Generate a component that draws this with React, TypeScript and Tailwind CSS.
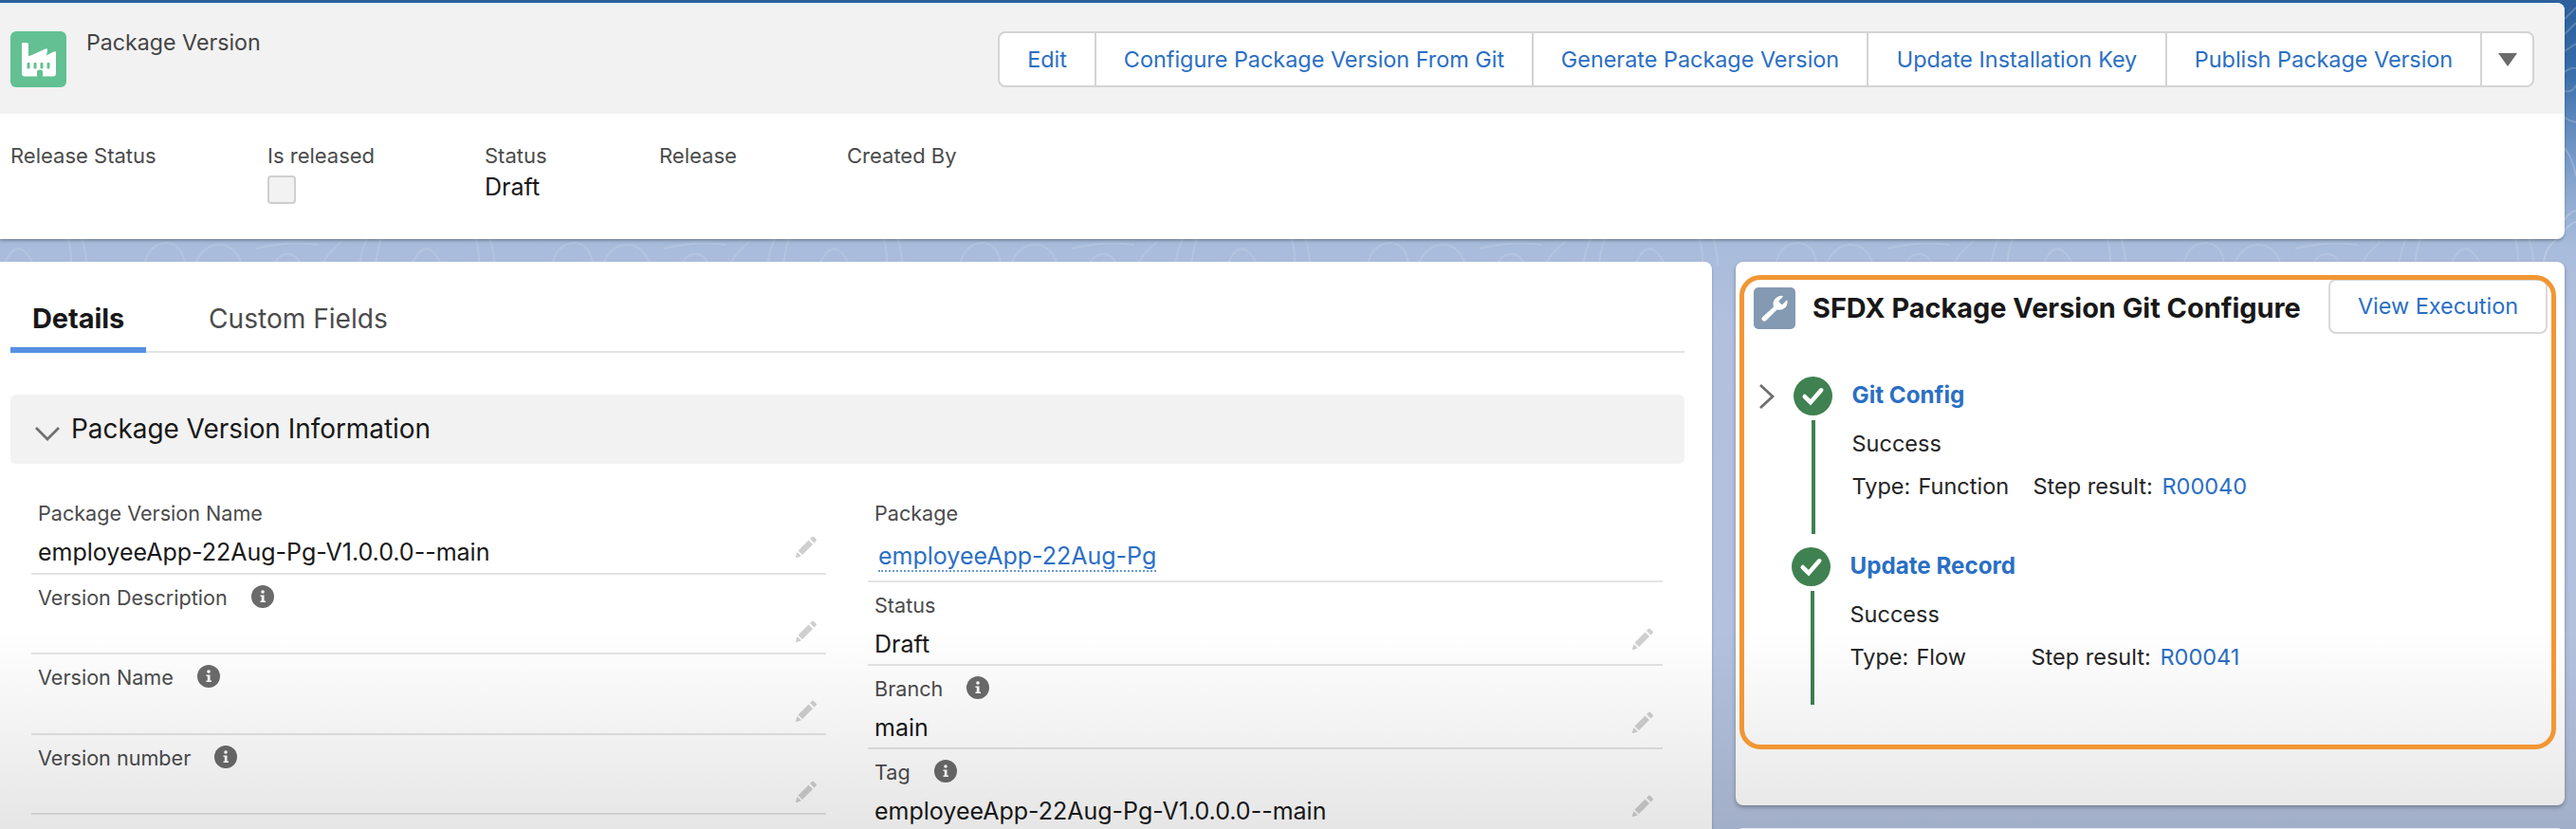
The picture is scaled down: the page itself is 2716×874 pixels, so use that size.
interface Field {
  label: string;
  value?: string;
  info?: boolean;
  link?: boolean;
  height: string;
}

interface Step {
  name: string;
  type: string;
  result: string;
  expandable?: boolean;
}

const actions = [
  { label: 'Edit', width: 'w-[102px]' },
  { label: 'Configure Package Version From Git', width: 'w-[461px]' },
  { label: 'Generate Package Version', width: 'w-[353px]' },
  { label: 'Update Installation Key', width: 'w-[315px]' },
  { label: 'Publish Package Version', width: 'w-[332px]' },
];

const leftFields: Field[] = [
  { label: 'Package Version Name', value: 'employeeApp-22Aug-Pg-V1.0.0.0--main', height: 'h-[89px]' },
  { label: 'Version Description', info: true, height: 'h-[84px]' },
  { label: 'Version Name', info: true, height: 'h-[85px]' },
  { label: 'Version number', info: true, height: 'h-[84px]' },
];

const rightFields: Field[] = [
  { label: 'Package', value: 'employeeApp-22Aug-Pg', link: true, height: 'h-[97px]' },
  { label: 'Status', value: 'Draft', height: 'h-[88px]' },
  { label: 'Branch', value: 'main', info: true, height: 'h-[88px]' },
  { label: 'Tag', value: 'employeeApp-22Aug-Pg-V1.0.0.0--main', info: true, height: 'h-[88px]' },
];

const steps: Step[] = [
  { name: 'Git Config', type: 'Function', result: 'R00040', expandable: true },
  { name: 'Update Record', type: 'Flow', result: 'R00041' },
];

function FactoryIcon() {
  return (
    <svg viewBox="0 0 59 59" className="h-[59px] w-[59px] shrink-0">
      <rect width="59" height="59" rx="6" fill="#62c092" />
      <path
        fill="#fff"
        fillRule="evenodd"
        d="M13 12h4q2 0 2 2v12l2.500-.5L37 18.500q2.500-1 2 1.500l-1 5.500 7.500-4q2.500-1 2.500 1V44.500q0 3-3 3H34v-5q0-2-3-2t-3 2v5H15q-3 0-3-3V13q0-1 1-1zM17.500 34v4.500q0 1 1 1h1q1 0 1-1V34q0-1-1-1h-1q-1 0-1 1zM24.500 34v4.500q0 1 1 1h1q1 0 1-1V34q0-1-1-1h-1q-1 0-1 1zM31.500 34v4.500q0 1 1 1h1q1 0 1-1V34q0-1-1-1h-1q-1 0-1 1zM38.500 34v4.500q0 1 1 1h1q1 0 1-1V34q0-1-1-1h-1q-1 0-1 1z"
      />
    </svg>
  );
}

function WrenchIcon() {
  return (
    <svg viewBox="0 0 44 44" className="mt-[3px] h-11 w-11 shrink-0">
      <rect width="44" height="44" rx="5" fill="#8499b2" />
      <path
        fill="#fff"
        d="M9 31.500L21 20.500q-1.500-5.500 2-9 3.500-3.200 7.500-2.500.7.400.2 1l-4 4q-.6.600 0 1.300l2.500 2.500q.7.600 1.300 0l4-4q.7-.5 1 .2.500 4.500-2.500 7.500-3.500 3.200-8.500 2L13 35q-2 1.500-3.800-.2-1.600-1.600-.2-3.300z"
      />
    </svg>
  );
}

function PencilIcon() {
  return (
    <svg viewBox="0 0 24 24" className="mb-[15px] mr-px h-6 w-6" fill="#cfcfcf">
      <path d="M3.500 15.500l4.500 4.500L19 9l-4.500-4.500zM16 3l4.500 4.500 2-2q1-1 0-2L20 1q-1-1-2 0zM2.500 17L1 22q0 1.200 1.200 1L6.800 21.200z" />
    </svg>
  );
}

function InfoIcon() {
  return (
    <svg viewBox="0 0 24 24" className="mb-[3px] h-6 w-6">
      <circle cx="12" cy="12" r="12" fill="#6b6b6b" />
      <circle cx="12" cy="7" r="1.800" fill="#fff" />
      <path d="M9.500 10.500h4v6H15V18H9.500v-1.500h1.300V12H9.500z" fill="#fff" />
    </svg>
  );
}

function Backdrop() {
  return (
    <svg viewBox="0 0 2716 874" className="absolute inset-0 -z-10 h-full w-full">
      <defs>
        <linearGradient id="sky" x1="0" y1="0" x2="0" y2="1">
          <stop offset="0" stopColor="#2d609d" />
          <stop offset="0.080" stopColor="#356ba8" />
          <stop offset="0.150" stopColor="#6089bd" />
          <stop offset="0.230" stopColor="#8ba8d0" />
          <stop offset="0.300" stopColor="#a9bcdb" />
          <stop offset="0.400" stopColor="#b2c0de" />
          <stop offset="1" stopColor="#b4c2de" />
        </linearGradient>
        <pattern id="contours" width="430" height="300" patternUnits="userSpaceOnUse">
          <g fill="none" stroke="#fff" strokeOpacity="0.120" strokeWidth="2">
            <path d="M0 290q20-60 44 10M70 245q10 30 0 60M84 245q12 30 4 60M200 300q6-40 30-42t30 42M150 300q0-42 24-44t22 44M270 262q30-8 66-4M330 300q10-30 30-45M390 246q-14 24-10 54M404 246q-10 24-8 54M290 300q-6-30 12-32t16 32" />
          </g>
        </pattern>
      </defs>
      <rect width="2716" height="874" fill="url(#sky)" />
      <rect y="250" width="2716" height="30" fill="url(#contours)" />
      <g fill="none" stroke="#fff" strokeOpacity="0.200" strokeWidth="2">
        <path d="M2704 20l12-12M2704 36l12-12M2704 54l12-8M2704 76q6-5 12-4M2704 96q8 2 12-6M2704 124q6 4 12 5M2704 156q9 12 12 30M2704 232q4-8 12-10M2704 243q6-8 12-9M2682 276q2-16 14-24" />
      </g>
    </svg>
  );
}

function FieldRow({ field }: { field: Field }) {
  return (
    <div className={`flex flex-col border-b-2 border-[#e4e4e4] pl-[7px] pr-2 ${field.height}`}>
      <div className="flex h-12 shrink-0 items-center gap-[25px] text-[21.600px] text-[#4b4b4b]">
        <span>{field.label}</span>
        {field.info && <InfoIcon />}
      </div>
      <div className="flex flex-1 items-center justify-between text-[25px] leading-[30px] text-[#181818]">
        {field.link ? (
          <a className="mb-1 ml-1 border-b-2 border-dotted border-[#6d9ad0] text-[#2a6fc4]">{field.value}</a>
        ) : (
          <span className="mb-[5px]">{field.value}</span>
        )}
        {!field.link && <PencilIcon />}
      </div>
    </div>
  );
}

function StepItem({ step }: { step: Step }) {
  return (
    <div className="flex h-[179.500px]">
      <div className={`flex h-[41px] items-center pl-[5px] ${step.expandable ? 'w-[38.500px]' : 'w-[36.500px]'}`}>
        {step.expandable && (
          <svg viewBox="0 0 18 26" className="h-[26px] w-[18px]" fill="none" stroke="#6f6f6f" strokeWidth="2.800">
            <path d="M2 1l13 12L2 25" />
          </svg>
        )}
      </div>
      <div className="flex w-12 flex-col items-center">
        <svg viewBox="0 0 40 40" className="h-[41px] w-[41px] shrink-0">
          <circle cx="20" cy="20" r="20" fill="#3f8150" />
          <path d="M11.500 20.500l6 6L28.500 14" fill="none" stroke="#fff" strokeWidth="4.500" strokeLinecap="round" />
        </svg>
        <div className={`mt-[5px] h-[120px] w-1 bg-[#3f8150] ${step.expandable ? '' : 'ml-0.5'}`} />
      </div>
      <div className="flex flex-col pl-[17px] text-[23.500px] leading-[36px] text-[#242424]">
        <a className="mt-[2px] text-[24.200px] font-bold text-[#2a6fc4]">{step.name}</a>
        <span className="mt-[15px]">Success</span>
        <div className="mt-[9px] flex">
          <span className="w-[70px]">Type:</span>
          <span className="w-[121px]">{step.type}</span>
          <span className="w-[136px]">Step result:</span>
          <a className="text-[#2a6fc4]">{step.result}</a>
        </div>
      </div>
    </div>
  );
}

export default function App() {
  return (
    <div className="relative isolate h-[874px] w-[2716px] overflow-hidden pt-[3px] font-['Inter',sans-serif]">
      <Backdrop />

      {/* Record header */}
      <header className="w-[2704px] overflow-hidden rounded-r-lg bg-white shadow-[0_2px_3px_rgba(0,0,0,0.25)]">
        <div className="flex h-[117px] justify-between bg-[#f2f2f2] pl-[11px] pr-8 pt-[30px]">
          <div className="flex gap-[21px]">
            <FactoryIcon />
            <span className="text-[23.200px] leading-[24px] text-[#444]">Package Version</span>
          </div>
          <div className="flex h-[59px] rounded-lg border-2 border-[#d4d4d4] bg-white">
            {actions.map(a => (
              <button key={a.label} className={`border-r-2 border-[#d4d4d4] pt-px text-[23.400px] text-[#2a6fc4] ${a.width}`}>
                {a.label}
              </button>
            ))}
            <button className="flex w-[53px] items-center justify-center">
              <svg viewBox="0 0 20 14" className="h-[14px] w-5" fill="#6b6b6b">
                <path d="M0 0h20L10 14z" />
              </svg>
            </button>
          </div>
        </div>
        <div className="flex h-[132px] pl-[11px] pt-[31px] text-[22px] leading-[26px] text-[#4b4b4b]">
          <span className="w-[271px]">Release Status</span>
          <div className="w-[229px]">
            <span>Is released</span>
            <div className="mt-2 h-[30px] w-[30px] rounded border-2 border-[#cfcfcf] bg-[#f2f2f2]" />
          </div>
          <div className="w-[184px]">
            <span>Status</span>
            <p className="text-[25px] leading-[41px] text-[#181818]">Draft</p>
          </div>
          <span className="w-[198px]">Release</span>
          <span>Created By</span>
        </div>
      </header>

      <div className="flex items-start gap-[25px] pt-6">
        {/* Details */}
        <main className="h-[620px] w-[1805px] rounded-tr-lg bg-white pl-[11px] pr-[29px] shadow-[0_2px_3px_rgba(0,0,0,0.25)]">
          <div className="flex h-24 border-b-2 border-[#e4e4e4] pt-6">
            <div className="h-[72px] w-[143px] border-b-[6px] border-[#5590e3] pl-[23px] text-[29px] font-bold leading-[72px] tracking-[-0.1px] text-[#181818]">
              Details
            </div>
            <div className="pl-[66px] text-[28.100px] leading-[72px] text-[#4b4b4b]">Custom Fields</div>
          </div>
          <div className="mt-11 flex h-[73px] items-center rounded-md bg-[#f2f2f2] pl-[26px] text-[27.900px] text-[#181818]">
            <svg viewBox="0 0 26 16" className="mr-3 mt-2 h-4 w-[26px]" fill="none" stroke="#6f6f6f" strokeWidth="2.800">
              <path d="M1 2l12 12L25 2" />
            </svg>
            Package Version Information
          </div>
          <div className="ml-[22px] mt-7 flex items-start gap-11">
            <div className="w-[838px]">
              {leftFields.map(f => <FieldRow key={f.label} field={f} />)}
            </div>
            <div className="w-[838px]">
              {rightFields.map(f => <FieldRow key={f.label} field={f} />)}
            </div>
          </div>
        </main>

        <div className="w-[874px]">
          {/* Execution progress */}
          <aside className="relative h-[573px] rounded-lg bg-white pl-[19px] pr-[18px] pt-[18px] shadow-[0_2px_4px_rgba(0,0,0,0.3)]">
            <div className="flex h-[58px] items-center">
              <WrenchIcon />
              <h2 className="ml-[18px] mt-[3px] text-[28.900px] font-bold text-[#181818]">SFDX Package Version Git Configure</h2>
              <button className="ml-auto h-[58px] w-[231px] rounded-lg border-2 border-[#d8d8d8] text-[23.400px] text-[#2a6fc4]">
                View Execution
              </button>
            </div>
            <div className="pt-[45px]">
              {steps.map(s => <StepItem key={s.name} step={s} />)}
            </div>
            <div className="absolute left-1 top-[14px] z-10 h-[500px] w-[861px] rounded-[22px] border-[5px] border-[#f29634]" />
          </aside>
          <div className="mt-6 h-10 rounded-t-lg bg-white" />
        </div>
      </div>

      {/* Fade along the bottom edge */}
      <div className="pointer-events-none absolute inset-x-0 bottom-0 h-[210px] bg-linear-to-b from-black/0 to-black/10" />
    </div>
  );
}
